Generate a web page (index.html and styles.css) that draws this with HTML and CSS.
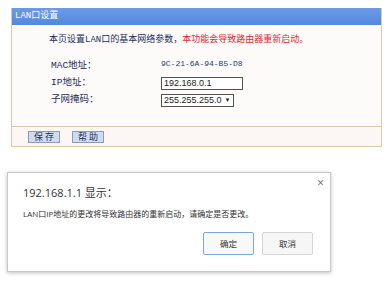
FILE: index.html
```html
<!DOCTYPE html>
<html>
<head>
<meta charset="utf-8">
<link rel="stylesheet" href="styles.css">
</head>
<body>
<div class="panel">
  <div class="panel-head">LAN口设置</div>
  <div class="panel-body">
    <div class="notice">本页设置LAN口的基本网络参数，<span class="warn">本功能会导致路由器重新启动。</span></div>
    <div class="grid">
      <div class="label">MAC地址：</div>
      <div class="mac">9C-21-6A-94-B5-D8</div>
      <div class="label">IP地址：</div>
      <div><div class="input">192.168.0.1</div></div>
      <div class="label">子网掩码：</div>
      <div><div class="select"><span>255.255.255.0</span><span class="arrow">▼</span></div></div>
    </div>
  </div>
  <div class="panel-foot">
    <span class="btn">保 存</span>
    <span class="btn">帮 助</span>
  </div>
</div>

<div class="dialog">
  <div class="close">×</div>
  <div class="d-title">192.168.1.1 显示：</div>
  <div class="d-msg">LAN口IP地址的更改将导致路由器的重新启动，请确定是否更改。</div>
  <div class="d-actions">
    <span class="d-btn ok">确定</span>
    <span class="d-btn">取消</span>
  </div>
</div>
</body>
</html>
```

FILE: styles.css
```css
html, body {
  margin: 0;
  padding: 0;
  background: #ffffff;
  font-family: "Liberation Sans", "Noto Sans CJK SC", sans-serif;
  width: 390px;
  height: 281px;
  overflow: hidden;
}
body {
  padding-top: 8px;
}
.panel {
  margin-left: 11px;
  width: 369px;
  border: 1px solid #ddc7ad;
  border-top: none;
  background: #fcfaf7;
}
.panel-head {
  height: 17px;
  line-height: 17px;
  background: linear-gradient(#6c9be6, #5387de);
  color: #ffffff;
  font-size: 9px;
  padding-left: 3px;
  font-family: "Liberation Mono", "Noto Sans CJK SC", monospace;
}
.panel-body {
  height: 102px;
  border-bottom: 1px solid #ddc7ad;
  background: #fdfbf9;
  padding-left: 37px;
  box-sizing: border-box;
  padding-top: 9px;
}
.notice {
  font-size: 9px;
  color: #1e2c5c;
  font-family: "Liberation Mono", "Noto Sans CJK SC", monospace;
  line-height: 12px;
}
.warn {
  color: #e0282c;
}
.grid {
  display: grid;
  grid-template-columns: 110px auto;
  grid-auto-rows: 17px;
  align-items: center;
  margin-top: 9px;
  margin-left: 2px;
}
.label {
  font-size: 9.5px;
  color: #1e2c5c;
  font-family: "Liberation Mono", "Noto Sans CJK SC", monospace;
}
.mac {
  font-size: 8px;
  color: #2a3a70;
  font-family: "Liberation Mono", monospace;
}
.input, .select {
  height: 11px;
  line-height: 11px;
  border: 1px solid #505050;
  background: #ffffff;
  font-size: 9px;
  color: #222;
  padding-left: 2px;
  box-sizing: content-box;
  white-space: nowrap;
}
.input {
  display: inline-block;
  width: 78px;
}
.select {
  display: inline-flex;
  align-items: center;
  gap: 3px;
  width: 67px;
  padding-right: 2px;
}
.arrow {
  font-size: 6px;
}
.panel-foot {
  height: 19px;
  display: flex;
  align-items: center;
  gap: 12px;
  padding-left: 16px;
  background: #fcf7f4;
}
.btn {
  display: inline-block;
  width: 30px;
  height: 10px;
  line-height: 10px;
  text-align: center;
  font-size: 9px;
  color: #1e2c5c;
  background: #d2dcf0;
  border: 1px solid #8a9ac0;
  font-family: "Noto Sans CJK SC", sans-serif;
}
.dialog {
  position: relative;
  margin-left: 7px;
  margin-top: 25px;
  width: 324px;
  height: 100px;
  border: 1px solid #c8c8c8;
  box-shadow: 0 1px 4px rgba(0,0,0,0.25);
  background: #ffffff;
  box-sizing: border-box;
  padding-left: 15px;
  padding-top: 11px;
}
.close {
  position: absolute;
  right: 6px;
  top: 3px;
  font-size: 12px;
  color: #777;
}
.d-title {
  font-size: 11px;
  color: #333;
  font-family: "Open Sans", "Noto Sans CJK SC", sans-serif;
}
.d-msg {
  font-size: 8px;
  color: #333;
  margin-top: 8px;
  font-family: "Open Sans", "Noto Sans CJK SC", sans-serif;
}
.d-actions {
  display: flex;
  justify-content: flex-end;
  gap: 8px;
  margin-top: 13px;
  padding-right: 17px;
}
.d-btn {
  display: inline-block;
  width: 49px;
  height: 21px;
  line-height: 21px;
  text-align: center;
  font-size: 8.5px;
  color: #333;
  background: #f6f6f6;
  border: 1px solid #d4d4d4;
  border-radius: 2px;
  font-family: "Noto Sans CJK SC", sans-serif;
}
.d-btn.ok {
  border-color: #7aa7e0;
  background: #f8f8f8;
}
```
